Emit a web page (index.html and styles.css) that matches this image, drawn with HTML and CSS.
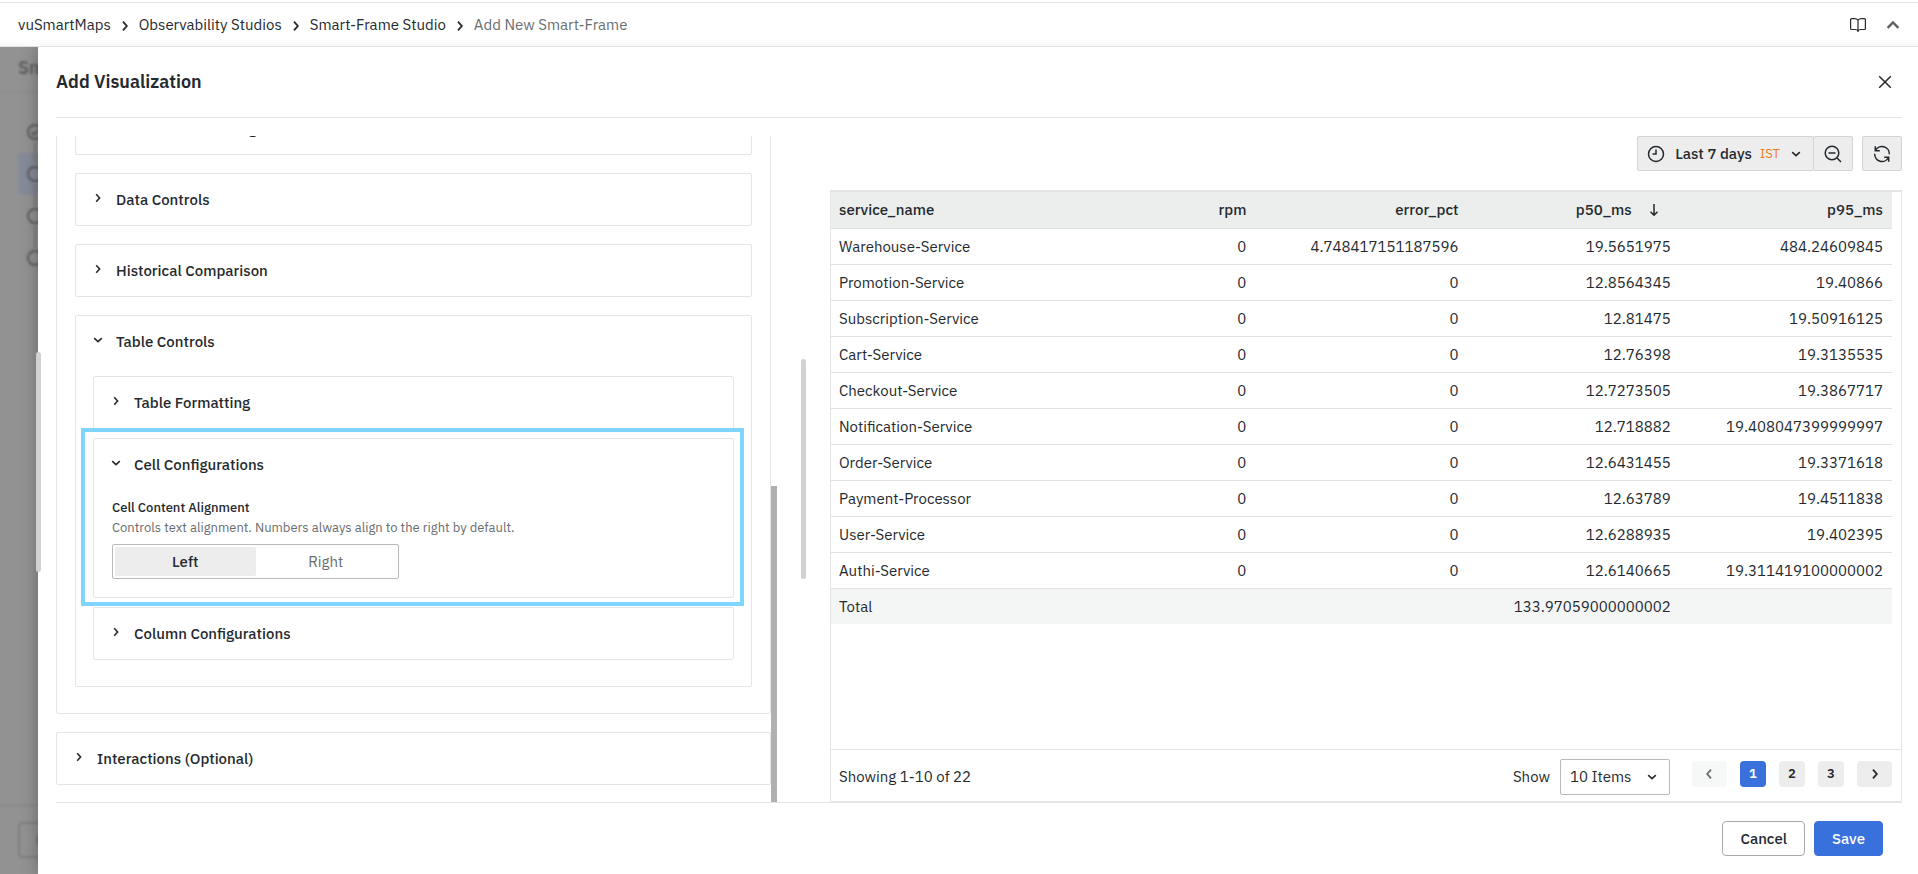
FILE: index.html
```
<!DOCTYPE html>
<html lang="en">
<head>
  <meta charset="UTF-8">
  <title>Add New Smart-Frame</title>
  <meta name="viewport" content="width=device-width, initial-scale=1.0">
  <link rel="stylesheet" href="styles.css">
</head>
<body>

  <!-- Icons -->
  <svg class="sprite" aria-hidden="true">
    <symbol id="chevron" viewBox="0 0 16 16"><path d="M6.2 4.2 9.6 8l-3.4 3.8" fill="none" stroke="currentColor" stroke-width="1.6"/></symbol>
    <symbol id="circle" viewBox="0 0 18 18"><circle cx="9" cy="9" r="7" fill="none" stroke="currentColor" stroke-width="2"/></symbol>
  </svg>

  <header class="topbar">
    <nav class="breadcrumbs">
      <a href="#">vuSmartMaps</a>
      <svg class="icon crumb-sep"><use href="#chevron"/></svg>
      <a href="#">Observability Studios</a>
      <svg class="icon crumb-sep"><use href="#chevron"/></svg>
      <a href="#">Smart-Frame Studio</a>
      <svg class="icon crumb-sep"><use href="#chevron"/></svg>
      <span class="current">Add New Smart-Frame</span>
    </nav>
    <div class="topbar-actions">
      <button class="icon-btn" aria-label="Documentation">
        <svg width="18" height="18" viewBox="0 0 18 18" fill="none" stroke="currentColor" stroke-width="1.2" stroke-linejoin="round"><path d="M9 4.2C8 3 7 2.6 5.5 2.6H2.6a1 1 0 0 0-1 1v8.900a1 1 0 0 0 1 1h3.600c1.300 0 2.300.4 2.800 1.500.5-1.100 1.500-1.500 2.800-1.500h3.600a1 1 0 0 0 1-1V3.600a1 1 0 0 0-1-1h-2.900C11 2.600 10 3 9 4.200zM9 4.200V16"/></svg>
      </button>
      <button class="icon-btn" aria-label="Collapse">
        <svg width="18" height="18" viewBox="0 0 18 18" fill="none" stroke="#5f6163" stroke-width="2.4"><path d="m3.600 11.800 5.400-5.400 5.400 5.400"/></svg>
      </button>
    </div>
  </header>

  <div class="stage">
    <!-- Dimmed page behind the drawer -->
    <div class="behind" aria-hidden="true">
      <div class="behind-page">
        <div class="behind-title">Sm</div>
        <div class="behind-steps">
          <div class="step"><svg width="18" height="18" viewBox="0 0 18 18" fill="none" stroke="currentColor" stroke-width="2"><circle cx="9" cy="9" r="7"/><path d="m5.500 9 2.500 2.500 4.500-4.500"/></svg></div>
          <div class="step active"><svg width="18" height="18"><use href="#circle"/></svg></div>
          <div class="step"><svg width="18" height="18"><use href="#circle"/></svg></div>
          <div class="step"><svg width="18" height="18"><use href="#circle"/></svg></div>
        </div>
        <div class="behind-footer"><div class="behind-btn">C</div></div>
      </div>
    </div>

    <main class="drawer">
      <div class="drawer-handle"></div>

      <div class="drawer-header">
        <h1>Add Visualization</h1>
        <button class="icon-btn" aria-label="Close">
          <svg width="18" height="18" viewBox="0 0 18 18" fill="none" stroke="currentColor" stroke-width="1.500"><path d="m3.200 3.200 11.600 11.600M14.800 3.200 3.200 14.800"/></svg>
        </button>
      </div>

      <div class="drawer-body">
        <!-- Options -->
        <div class="options">
          <div class="options-list">
            <section class="panel group">
              <section class="panel"><button class="panel-title"><svg class="icon"><use href="#chevron"/></svg>Visualization Settings</button></section>
              <section class="panel"><button class="panel-title"><svg class="icon"><use href="#chevron"/></svg>Data Controls</button></section>
              <section class="panel"><button class="panel-title"><svg class="icon"><use href="#chevron"/></svg>Historical Comparison</button></section>
              <section class="panel">
                <button class="panel-title open"><svg class="icon"><use href="#chevron"/></svg>Table Controls</button>
                <div class="nested">
                  <section class="panel"><button class="panel-title"><svg class="icon"><use href="#chevron"/></svg>Table Formatting</button></section>
                  <section class="panel highlighted">
                    <button class="panel-title open"><svg class="icon"><use href="#chevron"/></svg>Cell Configurations</button>
                    <fieldset class="field">
                      <legend>Cell Content Alignment</legend>
                      <p>Controls text alignment. Numbers always align to the right by default.</p>
                      <div class="segmented">
                        <label><input type="radio" name="align" checked><span>Left</span></label>
                        <label><input type="radio" name="align"><span>Right</span></label>
                      </div>
                    </fieldset>
                  </section>
                  <section class="panel"><button class="panel-title"><svg class="icon"><use href="#chevron"/></svg>Column Configurations</button></section>
                </div>
              </section>
            </section>
            <section class="panel"><button class="panel-title"><svg class="icon"><use href="#chevron"/></svg>Interactions (Optional)</button></section>
          </div>
          <div class="scrollbar"></div>
        </div>

        <div class="splitter"><div class="splitter-handle"></div></div>

        <!-- Preview -->
        <div class="preview">
          <div class="toolbar">
            <div class="btn-group">
              <button class="tool time">
                <svg width="18" height="18" viewBox="0 0 18 18" fill="none" stroke="currentColor" stroke-width="1.500"><circle cx="9" cy="9" r="7.500"/><path d="M9 4.500V9H5.500"/></svg>
                <span class="range">Last 7 days</span>
                <span class="tz">IST</span>
                <svg class="icon down"><use href="#chevron"/></svg>
              </button>
              <button class="tool" aria-label="Zoom out">
                <svg width="18" height="18" viewBox="0 0 18 18" fill="none" stroke="currentColor" stroke-width="1.500"><circle cx="8" cy="8" r="6.800"/><path d="M4.500 8h7M12.800 12.800l4.200 4.200"/></svg>
              </button>
            </div>
            <button class="tool" aria-label="Refresh">
              <svg width="18" height="18" viewBox="0 0 18 18" fill="none" stroke="currentColor" stroke-width="1.500"><path d="M2.500 5.500A7.300 7.300 0 0 1 16.300 9.200M1.700 8.800a7.300 7.300 0 0 0 13.800 3.700M2.300 1.300v4.500h4.500M15.700 16.700v-4.500h-4.500"/></svg>
            </button>
          </div>

          <div class="table-card">
            <div class="table-wrap">
              <table>
                <thead>
                  <tr>
                    <th>service_name</th>
                    <th>rpm</th>
                    <th>error_pct</th>
                    <th><span class="sorted">p50_ms<svg width="14" height="14" viewBox="0 0 14 14" fill="none" stroke="currentColor" stroke-width="1.500"><path d="M7 1v11M3.500 8.800 7 12.300l3.500-3.500"/></svg></span></th>
                    <th>p95_ms</th>
                  </tr>
                </thead>
                <tbody>
                  <tr><td>Warehouse-Service</td><td>0</td><td>4.748417151187596</td><td>19.5651975</td><td>484.24609845</td></tr>
                  <tr><td>Promotion-Service</td><td>0</td><td>0</td><td>12.8564345</td><td>19.40866</td></tr>
                  <tr><td>Subscription-Service</td><td>0</td><td>0</td><td>12.81475</td><td>19.50916125</td></tr>
                  <tr><td>Cart-Service</td><td>0</td><td>0</td><td>12.76398</td><td>19.3135535</td></tr>
                  <tr><td>Checkout-Service</td><td>0</td><td>0</td><td>12.7273505</td><td>19.3867717</td></tr>
                  <tr><td>Notification-Service</td><td>0</td><td>0</td><td>12.718882</td><td>19.408047399999997</td></tr>
                  <tr><td>Order-Service</td><td>0</td><td>0</td><td>12.6431455</td><td>19.3371618</td></tr>
                  <tr><td>Payment-Processor</td><td>0</td><td>0</td><td>12.63789</td><td>19.4511838</td></tr>
                  <tr><td>User-Service</td><td>0</td><td>0</td><td>12.6288935</td><td>19.402395</td></tr>
                  <tr><td>Authi-Service</td><td>0</td><td>0</td><td>12.6140665</td><td>19.311419100000002</td></tr>
                </tbody>
                <tfoot>
                  <tr><td>Total</td><td></td><td></td><td>133.97059000000002</td><td></td></tr>
                </tfoot>
              </table>
            </div>
            <div class="table-footer">
              <span>Showing 1-10 of 22</span>
              <div class="paging">
                <label for="page-size">Show</label>
                <div class="select">
                  <select id="page-size"><option>10 Items</option></select>
                  <svg class="icon down"><use href="#chevron"/></svg>
                </div>
                <div class="pages">
                  <button class="arrow prev" aria-label="Previous page" disabled><svg class="icon"><use href="#chevron"/></svg></button>
                  <button class="current">1</button>
                  <button>2</button>
                  <button>3</button>
                  <button class="arrow" aria-label="Next page"><svg class="icon"><use href="#chevron"/></svg></button>
                </div>
              </div>
            </div>
          </div>
        </div>
      </div>

      <div class="drawer-footer">
        <button class="btn">Cancel</button>
        <button class="btn primary">Save</button>
      </div>
    </main>
  </div>

</body>
</html>
```
FILE: styles.css
```
* {
  box-sizing: border-box;
}

body {
  margin: 0;
  height: 100vh;
  display: flex;
  flex-direction: column;
  overflow: hidden;
  background: #fff;
  color: #24292e;
  font-family: "IBM Plex Sans", Inter, sans-serif;
  font-size: 15px;
  line-height: 22px;
}

button {
  margin: 0;
  padding: 0;
  border: none;
  background: none;
  color: inherit;
  font: inherit;
  cursor: pointer;
}

svg {
  display: block;
  flex: none;
}

.sprite {
  position: absolute;
  width: 0;
  height: 0;
}

.icon {
  width: 16px;
  height: 16px;
}

.icon.down {
  transform: rotate(90deg);
}

/* Top bar */
.topbar {
  flex: none;
  display: flex;
  align-items: center;
  justify-content: space-between;
  height: 44px;
  margin-top: 2px;
  padding: 0 16px 0 18px;
  border-top: 1px solid #e4e5e6;
  box-shadow: inset 0 -6px 8px -6px rgba(0, 0, 0, 0.06);
}

.breadcrumbs {
  display: flex;
  align-items: center;
  gap: 5px;
}

.breadcrumbs a {
  color: inherit;
  text-decoration: none;
}

.breadcrumbs .current {
  color: #6a6d70;
}

.crumb-sep {
  width: 18px;
  height: 18px;
  margin-top: 2px;
}

.topbar-actions {
  display: flex;
  gap: 17px;
}

/* Page behind the drawer */
.stage {
  flex: 1;
  display: flex;
  min-height: 0;
  overflow: hidden;
  border-top: 1px solid #e0e1e2;
}

.behind {
  flex: none;
  display: flex;
  width: 38px;
  background: #929292;
  color: #5c5e60;
}

.behind-page {
  flex: none;
  display: flex;
  flex-direction: column;
  width: 80px;
  filter: blur(1px);
}

.behind-title {
  flex: none;
  height: 45px;
  padding: 10px 0 0 18px;
  border-bottom: 1px solid #888;
  font-size: 18px;
  font-weight: 600;
}

.behind-steps {
  flex: 1;
  padding: 19px 0 0 18px;
}

.step {
  position: relative;
  display: flex;
  align-items: center;
  height: 42px;
  padding-left: 8px;
}

.step + .step::before {
  content: "";
  position: absolute;
  left: 16px;
  top: -11px;
  width: 2px;
  height: 22px;
  background: #7e8081;
}

.step.active {
  background: #858b98;
}

.behind-footer {
  flex: none;
  height: 69px;
  padding: 16px 0 0 18px;
  border-top: 1px solid #808080;
}

.behind-btn {
  height: 36px;
  padding-left: 16px;
  border: 2px solid #7e8081;
  border-radius: 4px;
  line-height: 32px;
  font-weight: 500;
}

/* Drawer */
.drawer {
  position: relative;
  flex: 1;
  display: flex;
  flex-direction: column;
  min-width: 0;
  padding: 0 16px 0 18px;
  background: #fff;
  box-shadow: 0 0 16px rgba(0, 0, 0, 0.3);
}

.drawer-handle {
  position: absolute;
  left: -2px;
  top: 305px;
  width: 5px;
  height: 220px;
  border-radius: 3px;
  background: #d0d1d1;
}

.drawer-header {
  flex: none;
  display: flex;
  align-items: center;
  justify-content: space-between;
  height: 71px;
  padding-right: 8px;
  border-bottom: 1px solid #e4e5e6;
}

h1 {
  margin: 0;
  font-size: 18px;
  font-weight: 600;
}

.drawer-body {
  flex: 1;
  display: flex;
  min-height: 0;
  padding-top: 18px;
}

/* Options */
.options {
  flex: 0 0 721px;
  display: flex;
  min-width: 0;
  overflow: hidden;
}

.options-list {
  flex: 1;
  display: flex;
  flex-direction: column;
  justify-content: flex-end;
  padding-bottom: 17px;
}

.scrollbar {
  flex: none;
  align-self: flex-end;
  width: 6px;
  height: 316px;
  background: #b0b0b0;
}

.panel {
  flex: none;
  border: 1px solid #e4e5e6;
  border-radius: 2px;
  background: #fff;
}

.options-list > .panel + .panel {
  margin-top: 18px;
}

.group {
  display: flex;
  flex-direction: column;
  gap: 18px;
  padding: 18px 18px 26px;
}

.panel-title {
  display: flex;
  align-items: center;
  gap: 10px;
  width: 100%;
  height: 51px;
  padding: 0 14px;
  font-weight: 500;
  text-align: left;
}

.panel-title .icon {
  margin-bottom: 3px;
}

.panel-title.open .icon {
  transform: rotate(90deg);
}

.nested {
  display: flex;
  flex-direction: column;
  gap: 9px;
  padding: 9px 17px 26px;
}

.highlighted {
  position: relative;
}

.highlighted::after {
  content: "";
  position: absolute;
  inset: -11px -11px -9px -13px;
  border: 4px solid #80d5ff;
  pointer-events: none;
}

.field {
  min-width: 0;
  margin: 0;
  padding: 8px 18px 18px;
  border: none;
}

.field legend {
  float: left;
  width: 100%;
  padding: 0;
  font-size: 13px;
  font-weight: 500;
  line-height: 20px;
}

.field p {
  margin: 0;
  color: #6a6d70;
  font-size: 13px;
  line-height: 19px;
}

.segmented {
  display: flex;
  width: 287px;
  height: 35px;
  margin-top: 7px;
  padding: 2px;
  border: 1px solid #b8babb;
  border-radius: 2px;
}

.segmented label {
  flex: 1;
  cursor: pointer;
}

.segmented input {
  position: absolute;
  opacity: 0;
}

.segmented span {
  display: block;
  border-radius: 2px;
  color: #6a6d70;
  line-height: 29px;
  text-align: center;
}

.segmented input:checked + span {
  background: #ededed;
  color: #24292e;
  font-weight: 500;
}

/* Splitter */
.splitter {
  flex: 0 0 53px;
  display: flex;
  align-items: center;
  justify-content: center;
}

.splitter-handle {
  width: 5px;
  height: 220px;
  border-radius: 3px;
  background: #d0d1d1;
}

/* Preview */
.preview {
  flex: 1;
  display: flex;
  flex-direction: column;
  min-width: 0;
}

.toolbar {
  flex: none;
  display: flex;
  justify-content: flex-end;
  gap: 9px;
  margin-bottom: 19px;
}

.btn-group {
  display: flex;
}

.tool {
  display: flex;
  align-items: center;
  justify-content: center;
  gap: 8px;
  min-width: 40px;
  height: 35px;
  border: 1px solid #d3d4d5;
  border-radius: 2px;
  background: #ededed;
  font-weight: 500;
}

.tool.time {
  margin-right: -1px;
  padding: 0 9px;
}

.tool .range {
  padding-left: 2px;
}

.tool .tz {
  color: #f27a1a;
  font-size: 13px;
  font-weight: 400;
}

.table-card {
  flex: 1;
  display: flex;
  flex-direction: column;
  border: 1px solid #e4e5e6;
  border-top-width: 2px;
}

.table-wrap {
  flex: 1;
  padding-right: 9px;
}

table {
  width: 100%;
  border-collapse: collapse;
  table-layout: fixed;
}

th,
td {
  height: 36px;
  padding: 0 9px;
  border-bottom: 1px solid #e0e2e2;
  text-align: right;
}

td {
  padding-top: 2px;
}

th:first-child,
td:first-child {
  padding-left: 8px;
  text-align: left;
}

th {
  background: #eceeed;
  font-weight: 500;
}

tfoot td {
  border-bottom: none;
  background: #f4f6f5;
}

.sorted {
  display: flex;
  align-items: center;
  justify-content: flex-end;
  gap: 15px;
  padding-right: 10px;
}

.table-footer {
  flex: none;
  display: flex;
  align-items: center;
  justify-content: space-between;
  height: 52px;
  padding: 2px 9px 0 8px;
  border-top: 1px solid #e4e5e6;
}

.paging {
  display: flex;
  align-items: center;
}

.select {
  position: relative;
  margin: 0 22px 0 10px;
}

.select select {
  width: 110px;
  height: 36px;
  padding: 0 9px;
  border: 1px solid #b8babb;
  border-radius: 2px;
  background: #fff;
  color: inherit;
  font: inherit;
  appearance: none;
}

.select .icon {
  position: absolute;
  right: 10px;
  top: 10px;
  pointer-events: none;
}

.pages {
  display: flex;
  gap: 13px;
  margin-bottom: 6px;
}

.pages button {
  display: flex;
  align-items: center;
  justify-content: center;
  width: 26px;
  height: 26px;
  border-radius: 4px;
  background: #ededed;
  font-size: 13px;
  font-weight: 600;
}

.pages .arrow {
  width: 35px;
}

.pages .arrow .icon {
  width: 18px;
  height: 18px;
}

.pages .prev {
  background: #f6f7f7;
  color: #6a6d70;
  transform: rotate(180deg);
}

.pages .current {
  background: #3871dc;
  color: #fff;
}

/* Drawer footer */
.drawer-footer {
  flex: none;
  display: flex;
  align-items: center;
  justify-content: flex-end;
  gap: 9px;
  height: 72px;
  padding-right: 19px;
  border-top: 1px solid #e4e5e6;
}

.btn {
  height: 35px;
  padding: 0 17px;
  border: 1px solid #a8aaab;
  border-radius: 4px;
  font-weight: 500;
}

.btn.primary {
  border-color: #3871dc;
  background: #3871dc;
  color: #fff;
}
```
